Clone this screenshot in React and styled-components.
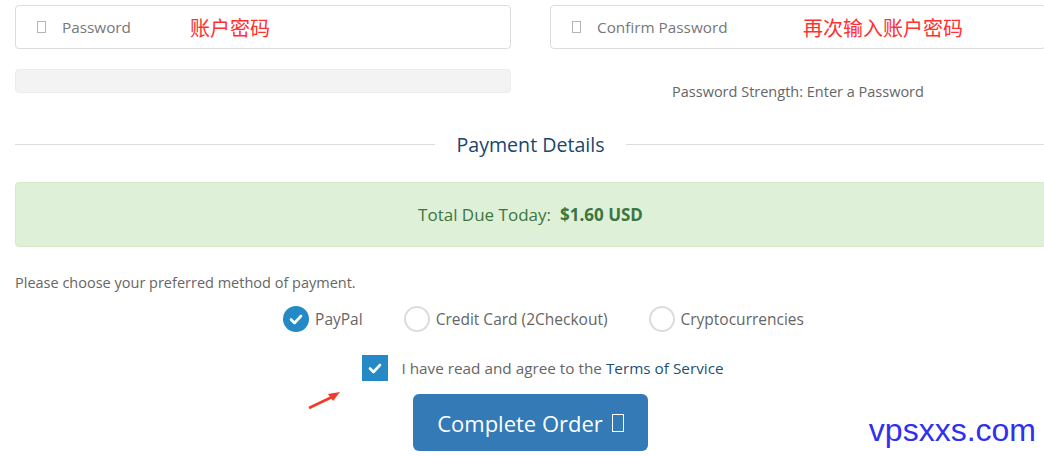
import React from "react";
import styled, { createGlobalStyle } from "styled-components";

const GlobalStyle = createGlobalStyle`
  html, body {
    margin: 0;
    padding: 0;
    background: #fff;
  }
  body {
    font-family: "Open Sans", "Noto Sans", "Noto Sans CJK SC", sans-serif;
  }
`;

const Page = styled.div`
  position: relative;
  width: 1044px;
  height: 457px;
  overflow: hidden;
`;

const Container = styled.div`
  width: 1031px;
  padding: 5px 0 0 15px;
`;

const FieldRow = styled.div`
  display: grid;
  grid-template-columns: 496px 496px;
  column-gap: 39px;
`;

const Column = styled.div`
  display: flex;
  flex-direction: column;
`;

const InputBox = styled.div`
  box-sizing: border-box;
  height: 44px;
  border: 1px solid #dcdcdc;
  border-radius: 4px;
  display: flex;
  align-items: center;
  padding-left: 21px;
`;

const Tofu = styled.span`
  box-sizing: border-box;
  display: inline-block;
  width: ${(p) => p.w || 9}px;
  height: ${(p) => p.h || 12}px;
  border: 1px solid ${(p) => p.color || "#b5b5b5"};
  flex-shrink: 0;
`;

const Placeholder = styled.span`
  display: inline-block;
  width: ${(p) => p.w}px;
  margin-left: 16px;
  font-size: 15.3px;
  color: #777;
  white-space: nowrap;
`;

const Note = styled.span`
  font-family: "Noto Sans CJK SC", sans-serif;
  font-size: 20px;
  color: #ff3030;
  white-space: nowrap;
`;

const StrengthBar = styled.div`
  box-sizing: border-box;
  margin-top: 20px;
  height: 24px;
  background: #f3f3f3;
  border: 1px solid #ececec;
  border-radius: 4px;
`;

const StrengthText = styled.div`
  margin-top: 34px;
  text-align: center;
  font-size: 14.5px;
  line-height: 18px;
  color: #666;
`;

const Divider = styled.div`
  display: flex;
  align-items: center;
  margin-top: 30px;
  height: 26px;
  &::before,
  &::after {
    content: "";
    flex: 1;
    border-top: 1px solid #ddd;
  }
`;

const DividerTitle = styled.span`
  padding: 0 21px;
  font-size: 19.6px;
  color: #17476e;
`;

const TotalBox = styled.div`
  box-sizing: border-box;
  margin-top: 25px;
  height: 65px;
  background: #dff0d8;
  border: 1px solid #d6e9c6;
  border-radius: 4px;
  display: flex;
  align-items: center;
  justify-content: center;
  font-size: 17px;
  color: #3c763d;
`;

const Amount = styled.strong`
  margin-left: 9px;
  font-weight: 700;
`;

const Prompt = styled.div`
  margin-top: 26px;
  font-size: 14.5px;
  line-height: 20px;
  color: #666;
`;

const MethodRow = styled.div`
  margin-top: 13px;
  display: flex;
  justify-content: center;
  gap: 41px;
  padding-left: 26px;
`;

const Method = styled.label`
  display: flex;
  align-items: center;
  gap: 6px;
  font-size: 15.5px;
  color: #666;
`;

const Radio = styled.span`
  box-sizing: border-box;
  width: 26px;
  height: 26px;
  border-radius: 50%;
  border: ${(p) => (p.checked ? "none" : "2px solid #dcdcdc")};
  background: ${(p) => (p.checked ? "#2489c5" : "#fff")};
  display: flex;
  align-items: center;
  justify-content: center;
`;

const TermsRow = styled.div`
  margin-top: 23px;
  display: flex;
  justify-content: center;
  align-items: center;
  gap: 13px;
  padding-left: 25px;
  font-size: 15.3px;
  color: #666;
`;

const Checkbox = styled.span`
  width: 26px;
  height: 26px;
  background: #2489c5;
  display: flex;
  align-items: center;
  justify-content: center;
`;

const Link = styled.span`
  color: #1f4f78;
`;

const ButtonRow = styled.div`
  margin-top: 13px;
  display: flex;
  justify-content: center;
`;

const OrderButton = styled.button`
  box-sizing: border-box;
  width: 235px;
  height: 57px;
  border: none;
  border-radius: 6px;
  background: #337ab7;
  color: #fff;
  font-family: "Open Sans", "Noto Sans", sans-serif;
  font-size: 22px;
  display: flex;
  align-items: center;
  justify-content: center;
  gap: 9px;
`;

const Watermark = styled.div`
  position: absolute;
  right: 8px;
  top: 412px;
  font-family: "Liberation Sans", Arial, sans-serif;
  font-size: 32px;
  color: #3030ee;
`;

const Arrow = styled.svg`
  position: absolute;
  left: 306px;
  top: 388px;
`;

const Check = () => (
  <svg width="14" height="11" viewBox="0 0 14 11">
    <path
      d="M2 5.5 L5.5 9 L12 2"
      fill="none"
      stroke="#fff"
      strokeWidth="2.6"
      strokeLinecap="round"
      strokeLinejoin="round"
    />
  </svg>
);

export default function App() {
  return (
    <Page>
      <GlobalStyle />
      <Container>
        <FieldRow>
          <Column>
            <InputBox>
              <Tofu />
              <Placeholder w={128}>Password</Placeholder>
              <Note>账户密码</Note>
            </InputBox>
            <StrengthBar />
          </Column>
          <Column>
            <InputBox>
              <Tofu />
              <Placeholder w={206}>Confirm Password</Placeholder>
              <Note>再次输入账户密码</Note>
            </InputBox>
            <StrengthText>Password Strength: Enter a Password</StrengthText>
          </Column>
        </FieldRow>

        <Divider>
          <DividerTitle>Payment Details</DividerTitle>
        </Divider>

        <TotalBox>
          Total Due Today: <Amount>$1.60 USD</Amount>
        </TotalBox>

        <Prompt>Please choose your preferred method of payment.</Prompt>

        <MethodRow>
          <Method>
            <Radio checked>
              <Check />
            </Radio>
            PayPal
          </Method>
          <Method>
            <Radio />
            Credit Card (2Checkout)
          </Method>
          <Method>
            <Radio />
            Cryptocurrencies
          </Method>
        </MethodRow>

        <TermsRow>
          <Checkbox>
            <Check />
          </Checkbox>
          <span>
            I have read and agree to the <Link>Terms of Service</Link>
          </span>
        </TermsRow>

        <ButtonRow>
          <OrderButton>
            Complete Order
            <Tofu w={12} h={18} color="#fff" />
          </OrderButton>
        </ButtonRow>
      </Container>

      <Arrow width="40" height="24" viewBox="0 0 40 24">
        <path d="M3 20 L26 9" stroke="#f03a2a" strokeWidth="2.5" fill="none" />
        <path d="M34 4 L22 6 L27 13 Z" fill="#f03a2a" />
      </Arrow>

      <Watermark>vpsxxs.com</Watermark>
    </Page>
  );
}
